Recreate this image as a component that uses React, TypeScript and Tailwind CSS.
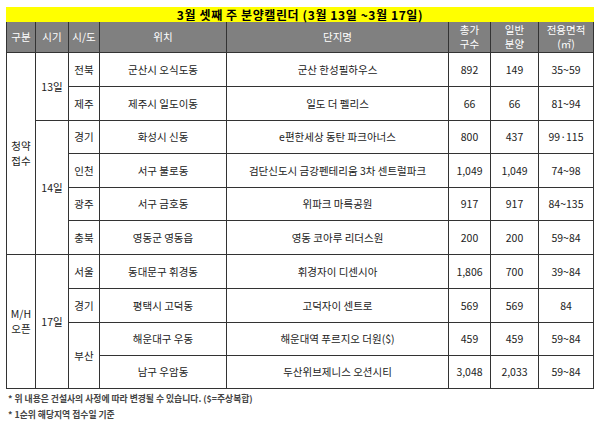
import React from 'react';

const FONT = { fontFamily: '"Noto Sans CJK KR", "Noto Sans", sans-serif' };

interface Row {
  group?: { label: string[]; span: number };
  date?: { label: string; span: number };
  region?: { label: string; span: number };
  location: string;
  name: string;
  total: string;
  general: string;
  area: string;
}

const rows: Row[] = [
  { group: { label: ['청약', '접수'], span: 6 }, date: { label: '13일', span: 2 }, region: { label: '전북', span: 1 }, location: '군산시 오식도동', name: '군산 한성필하우스', total: '892', general: '149', area: '35~59' },
  { region: { label: '제주', span: 1 }, location: '제주시 일도이동', name: '일도 더 펠리스', total: '66', general: '66', area: '81~94' },
  { date: { label: '14일', span: 4 }, region: { label: '경기', span: 1 }, location: '화성시 신동', name: 'e편한세상 동탄 파크아너스', total: '800', general: '437', area: '99·115' },
  { region: { label: '인천', span: 1 }, location: '서구 불로동', name: '검단신도시 금강펜테리움 3차 센트럴파크', total: '1,049', general: '1,049', area: '74~98' },
  { region: { label: '광주', span: 1 }, location: '서구 금호동', name: '위파크 마륵공원', total: '917', general: '917', area: '84~135' },
  { region: { label: '충북', span: 1 }, location: '영동군 영동읍', name: '영동 코아루 리더스원', total: '200', general: '200', area: '59~84' },
  { group: { label: ['M/H', '오픈'], span: 4 }, date: { label: '17일', span: 4 }, region: { label: '서울', span: 1 }, location: '동대문구 휘경동', name: '휘경자이 디센시아', total: '1,806', general: '700', area: '39~84' },
  { region: { label: '경기', span: 1 }, location: '평택시 고덕동', name: '고덕자이 센트로', total: '569', general: '569', area: '84' },
  { region: { label: '부산', span: 2 }, location: '해운대구 우동', name: '해운대역 푸르지오 더원($)', total: '459', general: '459', area: '59~84' },
  { location: '남구 우암동', name: '두산위브제니스 오션시티', total: '3,048', general: '2,033', area: '59~84' },
];

const heights = ['h-[34px]', 'h-[34px]', 'h-[33px]', 'h-[34px]', 'h-[33px]', 'h-[34px]', 'h-[34px]', 'h-[34px]', 'h-[33px]', 'h-[33px]'];

const td = 'border border-[#333] text-center align-middle p-0';

export default function App() {
  return (
    <div className="w-[600px] h-[423px] bg-white pt-[7px] px-[6px] text-[#222]" style={FONT}>
      <div className="h-[15px] bg-[#ffff00] flex items-center justify-center text-[12px] tracking-[0.6px] font-bold leading-none text-black">
        3월 셋째 주 분양캘린더 (3월 13일 ~3월 17일)
      </div>
      <table className="w-[587px] table-fixed border-collapse text-[10.5px] leading-[15px]">
        <colgroup>
          <col className="w-[29px]" />
          <col className="w-[33px]" />
          <col className="w-[31px]" />
          <col className="w-[127px]" />
          <col className="w-[222px]" />
          <col className="w-[42px]" />
          <col className="w-[48px]" />
          <col className="w-[55px]" />
        </colgroup>
        <thead>
          <tr className="h-[30px] bg-[#808080] text-white">
            <th className={cn(td, 'font-normal border-t-0')}>구분</th>
            <th className={cn(td, 'font-normal border-t-0')}>시기</th>
            <th className={cn(td, 'font-normal border-t-0')}>시/도</th>
            <th className={cn(td, 'font-normal border-t-0')}>위치</th>
            <th className={cn(td, 'font-normal border-t-0')}>단지명</th>
            <th className={cn(td, 'font-normal border-t-0 leading-[14px]')}>총가<br />구수</th>
            <th className={cn(td, 'font-normal border-t-0 leading-[14px]')}>일반<br />분양</th>
            <th className={cn(td, 'font-normal border-t-0 leading-[14px]')}>전용면적<br />(㎡)</th>
          </tr>
        </thead>
        <tbody>
          {rows.map((r, i) => (
            <tr key={i} className={heights[i]}>
              {r.group && (
                <td rowSpan={r.group.span} className={td}>
                  {r.group.label[0]}<br />{r.group.label[1]}
                </td>
              )}
              {r.date && <td rowSpan={r.date.span} className={td}>{r.date.label}</td>}
              {r.region && <td rowSpan={r.region.span} className={td}>{r.region.label}</td>}
              <td className={td}>{r.location}</td>
              <td className={cn(td, 'whitespace-nowrap')}>{r.name}</td>
              <td className={td}>{r.total}</td>
              <td className={td}>{r.general}</td>
              <td className={td}>{r.area}</td>
            </tr>
          ))}
        </tbody>
      </table>
      <div className="mt-[2px] pl-[2px] text-[8.8px] font-bold text-[#444] leading-[16px]">
        <p>* 위 내용은 건설사의 사정에 따라 변경될 수 있습니다. ($=주상복합)</p>
        <p>* 1순위 해당지역 접수일 기준</p>
      </div>
    </div>
  );
}

function cn(...parts: string[]) {
  return parts.join(' ');
}
